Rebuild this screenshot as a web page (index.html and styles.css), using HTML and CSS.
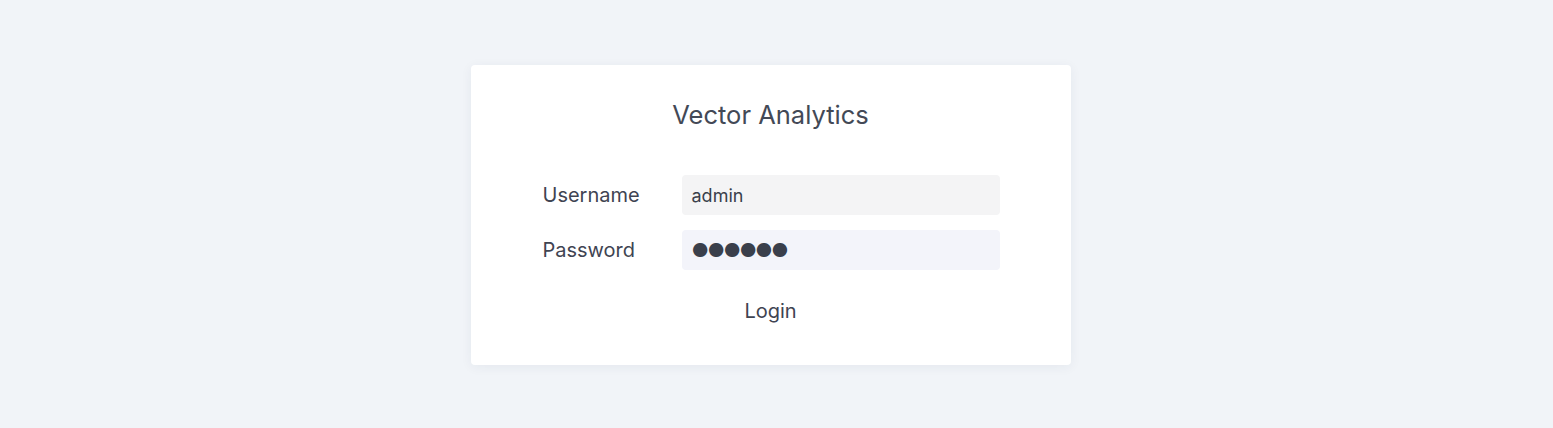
FILE: index.html
```html
<!DOCTYPE html>
<html>
<head>
<meta charset="utf-8">
<link rel="stylesheet" href="styles.css">
</head>
<body>
<div class="page">
  <div class="card">
    <h1 class="title">Vector Analytics</h1>
    <div class="form">
      <div class="row">
        <label class="label">Username</label>
        <div class="input user">admin</div>
      </div>
      <div class="row">
        <label class="label">Password</label>
        <div class="input pass">●●●●●●</div>
      </div>
      <div class="actions"><span class="login">Login</span></div>
    </div>
  </div>
</div>
</body>
</html>
```
FILE: styles.css
```css
html, body { margin: 0; padding: 0; }
body {
  background: #f1f4f8;
  font-family: Inter, "Noto Sans", sans-serif;
  color: #3f4452;
  height: 428px;
  overflow: hidden;
}
.page {
  display: flex;
  justify-content: center;
  padding-top: 65px;
  padding-right: 12px;
}
.card {
  width: 600px;
  height: 300px;
  box-sizing: border-box;
  background: #ffffff;
  border-radius: 4px;
  box-shadow: 0 2px 12px rgba(30, 50, 90, 0.06);
  display: flex;
  flex-direction: column;
  align-items: center;
  padding-top: 34px;
}
.title {
  margin: 0;
  font-size: 25.5px;
  font-weight: 400;
  line-height: 32px;
  color: #434956;
}
.form {
  width: 457px;
  margin-top: 44px;
  margin-left: 1px;
  display: flex;
  flex-direction: column;
  gap: 15px;
}
.row {
  display: flex;
  align-items: center;
}
.label {
  width: 139px;
  font-size: 20px;
  color: #3f4452;
}
.input {
  width: 318px;
  height: 40px;
  box-sizing: border-box;
  border-radius: 4px;
  padding-left: 10px;
  display: flex;
  align-items: center;
  font-size: 18px;
  color: #3a3f4b;
}
.user { background: #f4f4f5; }
.pass { background: #f3f4fa; font-size: 19px; letter-spacing: -1.4px; }
.actions {
  display: flex;
  justify-content: center;
  padding-top: 14px;
}
.login {
  font-size: 20px;
  color: #3f4452;
  margin-left: -1px;
}
```
